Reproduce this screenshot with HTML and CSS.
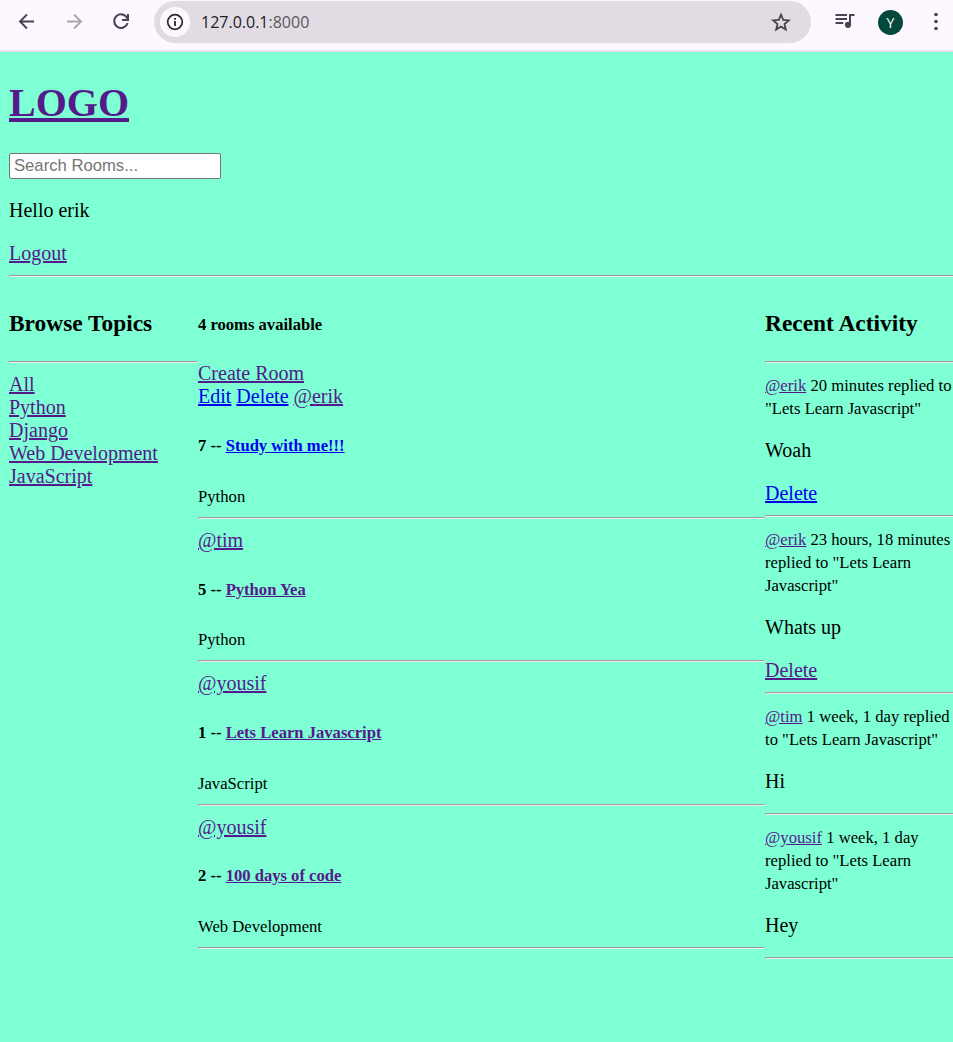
FILE: index.html
```html
<!DOCTYPE html>
<html lang="en">
<head>
<meta charset="utf-8">
<meta name="viewport" content="width=device-width, initial-scale=1">
<title>127.0.0.1:8000</title>
<link rel="stylesheet" href="styles.css">
</head>
<body>
<div class="toolbar">
  <div class="nav-buttons">
    <button class="icon-button" type="button" aria-label="Back"><svg width="24" height="24" viewBox="0 0 24 24"><path d="M19 11.500H5.500M12 4.500L5 11.500l7 7" fill="none" stroke="#4b4152" stroke-width="1.900"/></svg></button>
    <button class="icon-button" type="button" aria-label="Forward"><svg width="24" height="24" viewBox="0 0 24 24"><path d="M5 11.500h13.500M12 4.500l7 7-7 7" fill="none" stroke="#aaa4ae" stroke-width="1.900"/></svg></button>
    <button class="icon-button" type="button" aria-label="Reload"><svg width="24" height="24" viewBox="0 0 24 24"><path d="M18.200 8.200A6.800 6.800 0 1 0 18.600 13" fill="none" stroke="#4b4152" stroke-width="2"/><path d="M18 4h2v7h-7V9h5z" fill="#4b4152"/></svg></button>
  </div>
  <div class="address">
    <button class="icon-button site-info" type="button" aria-label="Site information"><svg width="20" height="20" viewBox="0 0 20 20"><circle cx="10" cy="10" r="7.300" fill="none" stroke="#29262c" stroke-width="1.700"/><path d="M9.100 9h1.800v5H9.100zM9.100 6h1.800v1.800H9.100z" fill="#29262c"/></svg></button>
    <span class="url">127.0.0.1<span class="port">:8000</span></span>
    <button class="icon-button" type="button" aria-label="Bookmark"><svg width="24" height="24" viewBox="0 0 24 24"><path d="M12 4.700l2.200 5.200 5.600.500-4.300 3.700 1.300 5.500-4.800-3-4.800 3 1.300-5.500-4.300-3.700 5.600-.500z" fill="none" stroke="#48434b" stroke-width="1.800"/></svg></button>
  </div>
  <div class="tools">
    <button class="icon-button" type="button" aria-label="Media controls"><svg width="24" height="24" viewBox="0 0 24 24"><path d="M2.500 4H14v2H2.500zM2.500 8H14v2H2.500zM2.500 12h7.800v2H2.500z" fill="#4b4152"/><circle cx="15" cy="14.800" r="3.100" fill="#4b4152"/><path d="M16 4h5.500v2H18v9h-2z" fill="#4b4152"/></svg></button>
    <button class="avatar" type="button" aria-label="Profile">Y</button>
    <button class="icon-button" type="button" aria-label="Menu"><svg width="24" height="24" viewBox="0 0 24 24" fill="#4b4152"><circle cx="12" cy="4.500" r="1.800"/><circle cx="12" cy="11.500" r="1.800"/><circle cx="12" cy="18.500" r="1.800"/></svg></button>
  </div>
</div>

<div class="page">
  <header>
    <h1><a href="#">LOGO</a></h1>
    <form class="search"><input type="text" name="q" placeholder="Search Rooms..." aria-label="Search Rooms"></form>
    <p>Hello erik</p>
    <a href="#">Logout</a>
    <hr>
  </header>

  <main class="home">
    <nav>
      <h3>Browse Topics</h3>
      <hr>
      <div><a href="#">All</a></div>
      <div><a href="#">Python</a></div>
      <div><a href="#">Django</a></div>
      <div><a href="#">Web Development</a></div>
      <div><a href="#">JavaScript</a></div>
    </nav>

    <section>
      <h5>4 rooms available</h5>
      <a href="#">Create Room</a>
      <div>
        <a class="fresh" href="#">Edit</a>
        <a class="fresh" href="#">Delete</a>
        <a href="#">@erik</a>
        <h5>7 -- <a class="fresh" href="#">Study with me!!!</a></h5>
        <small>Python</small>
        <hr>
      </div>
      <div>
        <a href="#">@tim</a>
        <h5>5 -- <a href="#">Python Yea</a></h5>
        <small>Python</small>
        <hr>
      </div>
      <div>
        <a href="#">@yousif</a>
        <h5>1 -- <a href="#">Lets Learn Javascript</a></h5>
        <small>JavaScript</small>
        <hr>
      </div>
      <div>
        <a href="#">@yousif</a>
        <h5>2 -- <a href="#">100 days of code</a></h5>
        <small>Web Development</small>
        <hr>
      </div>
    </section>

    <aside>
      <h3>Recent Activity</h3>
      <hr>
      <div>
        <small><a href="#">@erik</a> 20 minutes replied to "Lets Learn Javascript"</small>
        <p>Woah</p>
        <a class="fresh" href="#">Delete</a>
        <hr>
      </div>
      <div>
        <small><a href="#">@erik</a> 23 hours, 18 minutes replied to "Lets Learn Javascript"</small>
        <p>Whats up</p>
        <a href="#">Delete</a>
        <hr>
      </div>
      <div>
        <small><a href="#">@tim</a> 1 week, 1 day replied to "Lets Learn Javascript"</small>
        <p>Hi</p>
        <hr>
      </div>
      <div>
        <small><a href="#">@yousif</a> 1 week, 1 day replied to "Lets Learn Javascript"</small>
        <p>Hey</p>
        <hr>
      </div>
    </aside>
  </main>
</div>
</body>
</html>
```

FILE: styles.css
```css
body {
  margin: 0;
  overflow-x: hidden;
  background: #7fffd4;
  color: #000;
  font-family: "Liberation Serif", "Times New Roman", serif;
  font-size: 20px;
  line-height: 23px;
}

/* Browser toolbar */
.toolbar {
  display: flex;
  align-items: center;
  padding: 1px 5px 7px 15px;
  background: #fdf7ff;
  border-bottom: 2px solid #e5dde8;
}

.nav-buttons {
  display: flex;
  gap: 23px;
  margin-right: 21px;
}

.icon-button {
  display: flex;
  align-items: center;
  justify-content: center;
  padding: 0;
  border: 0;
  background: none;
}

.address {
  display: flex;
  flex: 1;
  align-items: center;
  gap: 11px;
  height: 42px;
  padding: 0 18px 0 6px;
  border-radius: 21px;
  background: #e2dbe4;
}

.site-info {
  width: 30px;
  height: 30px;
  border-radius: 50%;
  background: #fdf7ff;
}

.url {
  flex: 1;
  color: #202024;
  font-family: "Open Sans", sans-serif;
  font-size: 16px;
}

.port {
  color: #5b5660;
}

.tools {
  display: flex;
  align-items: center;
  gap: 21px;
  margin-left: 22px;
}

.avatar {
  width: 25px;
  height: 25px;
  padding: 0;
  border: 0;
  border-radius: 50%;
  background: #04493c;
  color: #fff;
  font-family: "Open Sans", sans-serif;
  font-size: 14px;
}

/* Page */
.page {
  display: flow-root;
  margin-right: -1px;
  padding-left: 9px;
}

a {
  color: #551a8b;
}

a.fresh {
  color: #0000ee;
}

h1 {
  margin: 27px 0;
  line-height: 47px;
}

h3 {
  line-height: 27px;
}

h5 {
  line-height: 20px;
}

small {
  line-height: 20px;
}

.search {
  display: flex;
}

.search input {
  box-sizing: border-box;
  width: 212px;
  height: 26px;
  padding: 1px 4px;
  border: 1px solid #767676;
  border-radius: 2px;
  background: #fff;
  font-family: "Liberation Sans", Arial, sans-serif;
  font-size: smaller;
}

.home {
  display: grid;
  grid-template-columns: minmax(0, 1fr) minmax(0, 3fr) minmax(0, 1fr);
}
```
